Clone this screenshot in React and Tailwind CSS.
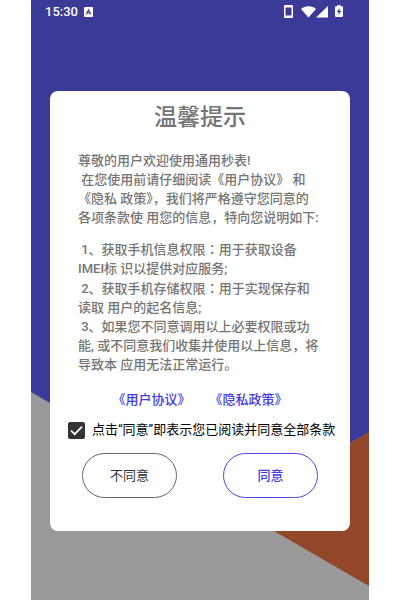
import { useState } from 'react'

const introLines = [
  '尊敬的用户欢迎使用通用秒表!',
  ' 在您使用前请仔细阅读《用户协议》 和',
  '《隐私 政策》，我们将严格遵守您同意的',
  '各项条款使 用您的信息，特向您说明如下:',
]

const permissionLines = [
  ' 1、获取手机信息权限：用于获取设备',
  'IMEI标 识以提供对应服务;',
  ' 2、获取手机存储权限：用于实现保存和',
  '读取 用户的起名信息;',
  ' 3、如果您不同意调用以上必要权限或功',
  '能, 或不同意我们收集并使用以上信息，将',
  '导致本 应用无法正常运行。',
]

// The full-width colon sits in the middle of its cell
function Line({ text }) {
  const [before, after] = text.split('：')
  return (
    <span className="block whitespace-pre">
      {before}
      {after && <span className="font-['Noto_Sans_CJK_JP',sans-serif]">：</span>}
      {after}
    </span>
  )
}

function StatusBar() {
  return (
    <header className="flex items-center justify-between pt-1 pl-[14px] pr-[26px] text-white">
      <div className="flex items-center gap-[6px]">
        <span className="text-[13px] leading-[15px] font-medium">15:30</span>
        <svg width="9" height="10" viewBox="0 0 9 10" aria-hidden="true">
          <rect width="9" height="10" rx="1" fill="white" />
          <path d="M2.3 7.3 4.5 2.7 6.7 7.3M3.1 5.9h2.8" fill="none" stroke="#3b3a98" strokeWidth="1.1" />
        </svg>
      </div>
      <div className="flex items-center" aria-hidden="true">
        <svg className="mr-2" width="9" height="13" viewBox="0 0 9 13">
          <path fill="white" fillRule="evenodd" d="M1 0h7a1 1 0 0 1 1 1v11a1 1 0 0 1-1 1H1a1 1 0 0 1-1-1V1a1 1 0 0 1 1-1Zm.5 2.5v8h6v-8Z" />
        </svg>
        <svg width="15" height="13" viewBox="0 0 15 13">
          <path fill="white" d="M0 4C4 .3 11 .3 15 4L7.500 12.500Z" />
        </svg>
        <svg className="mr-[7px]" width="12" height="13" viewBox="0 0 12 13">
          <path fill="white" d="M12 1v11.500H0Z" />
        </svg>
        <svg width="8" height="13" viewBox="0 0 8 13">
          <path fill="white" d="M2.500 0h3v1.300H7a1 1 0 0 1 1 1V11a1 1 0 0 1-1 1H1a1 1 0 0 1-1-1V2.300a1 1 0 0 1 1-1h1.500Z" />
          <path fill="#3b3a98" d="M4.600 3 1.900 7h1.700v3L6.200 6H4.600Z" />
        </svg>
      </div>
    </header>
  )
}

function Backdrop() {
  return (
    <svg className="absolute inset-0 h-full w-full" viewBox="0 0 338 600" preserveAspectRatio="none" aria-hidden="true">
      <rect width="338" height="600" fill="#999999" />
      <path d="M203 508 338 432V586Z" fill="#934729" />
      <path d="M0 0H338V432L203 509 0 392Z" fill="#3b3a98" />
    </svg>
  )
}

export default function App() {
  const [accepted, setAccepted] = useState(true)

  return (
    <div className="min-h-screen bg-white px-[31px] font-[Roboto,'Noto_Sans_CJK_SC',sans-serif]">
      <div className="relative min-h-screen overflow-hidden">
        <Backdrop />
        <div className="relative">
          <StatusBar />

          <main role="dialog" aria-labelledby="notice-title" className="mx-[19px] mt-[72px] rounded-lg bg-white pt-[9px] pb-[33px]">
            <h1 id="notice-title" className="text-center text-[23px] leading-9 font-medium text-[#757575]">
              温馨提示
            </h1>

            <div className="mt-[15px] pl-7 text-[13px] leading-[19px] font-medium text-[#757575]">
              <p>
                {introLines.map(line => <Line key={line} text={line} />)}
              </p>
              <p className="mt-3">
                {permissionLines.map(line => <Line key={line} text={line} />)}
              </p>
            </div>

            <nav className="mt-4 flex justify-center gap-[19px] text-[13px] leading-5 font-medium text-[#3f3ce0]">
              <a href="#agreement">《用户协议》</a>
              <a href="#privacy">《隐私政策》</a>
            </nav>

            <div className="mt-[10px] flex items-center gap-[7px] pl-[18px]">
              <span className="relative flex">
                <input
                  id="accept"
                  type="checkbox"
                  checked={accepted}
                  onChange={e => setAccepted(e.target.checked)}
                  className="size-[17px] appearance-none rounded-xs border border-[#333333] checked:bg-[#333333]"
                />
                {accepted && (
                  <svg className="pointer-events-none absolute inset-0" width="17" height="17" viewBox="0 0 17 17" aria-hidden="true">
                    <path d="M3 8.500 6.700 12.200 14 4.700" fill="none" stroke="white" strokeWidth="1.700" />
                  </svg>
                )}
              </span>
              <label htmlFor="accept" className="text-[13px] leading-5 whitespace-nowrap text-black">
                点击“同意”即表示您已阅读并同意全部条款
              </label>
            </div>

            <div className="mt-[13px] flex justify-between px-8 text-[13px]">
              <button type="button" className="h-[45px] w-[95px] rounded-full border border-[#666666] text-[#333333]">
                不同意
              </button>
              <button type="button" className="h-[45px] w-[95px] rounded-full border border-[#4a47e8] font-medium text-[#3f3ce0]">
                同意
              </button>
            </div>
          </main>
        </div>
      </div>
    </div>
  )
}
